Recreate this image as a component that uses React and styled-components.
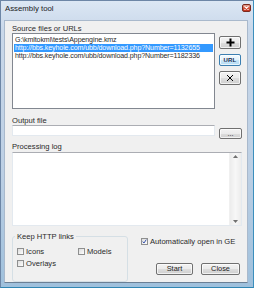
import React from 'react'
import styled, { createGlobalStyle } from 'styled-components'

const Global = createGlobalStyle`
  html, body { margin: 0; padding: 0; background: #ffffff; }
  * { box-sizing: border-box; }
`

const Window = styled.div`
  width: 254px;
  height: 288px;
  display: flex;
  flex-direction: column;
  border: 1px solid #6d86a6;
  border-bottom-color: #2f86b3;
  border-right-color: #3c8fbd;
  background: linear-gradient(to bottom, #dce7f4 0%, #c9d8ea 10%, #bccfe4 60%, #9fc0dc 100%);
  padding: 0 5px 4px 3px;
  font-family: "Liberation Sans", Arial, sans-serif;
  font-size: 7.6px;
  color: #222;
`

const TitleBar = styled.div`
  height: 19px;
  display: flex;
  align-items: flex-start;
  justify-content: space-between;
  padding: 3px 0 0 1px;
`

const Title = styled.span`
  font-size: 7.8px;
  line-height: 9px;
  color: #1b1b1b;
`

const CloseBox = styled.div`
  width: 9px;
  height: 8px;
  margin: 0 -3px 0 0;
  border: 1px solid #7c2a1e;
  border-radius: 2px;
  background: linear-gradient(to bottom, #e8a493 0%, #d4533c 50%, #c2351e 100%);
  display: flex;
  align-items: center;
  justify-content: center;
`

const Client = styled.div`
  flex: 1;
  background: #f0f0f0;
  border: 1px solid #a9b9cc;
  border-bottom-color: #6b7f95;
  padding: 3px 5px 0 7px;
  display: flex;
  flex-direction: column;
`

const Label = styled.div`
  line-height: 9px;
  height: 9px;
  margin-top: ${p => p.$top || 0}px;
  margin-bottom: ${p => p.$bottom || 0}px;
  color: #2a2a2a;
`

const Row = styled.div`
  display: flex;
  align-items: flex-start;
`

const ListBox = styled.div`
  width: 203px;
  height: 76px;
  background: #fff;
  border: 1px solid #828790;
  padding: 2px 1px;
`

const ListItem = styled.div`
  height: 8px;
  line-height: 8px;
  padding-left: 1px;
  font-size: 7.1px;
  letter-spacing: -0.12px;
  white-space: nowrap;
  overflow: hidden;
  background: ${p => (p.$selected ? '#3399ff' : 'transparent')};
  color: ${p => (p.$selected ? '#ffffff' : '#2a2a2a')};
`

const SideButtons = styled.div`
  display: flex;
  flex-direction: column;
  gap: 5px;
  margin: 3px 0 0 4px;
`

const Button = styled.button`
  font-family: inherit;
  font-size: 7.4px;
  color: #222;
  width: ${p => p.$w || 22}px;
  height: ${p => p.$h || 12}px;
  padding: 0;
  margin: 0;
  border: 1px solid ${p => (p.$focus ? '#3c7fb1' : '#707070')};
  border-radius: 2px;
  background: ${p =>
    p.$focus
      ? 'linear-gradient(to bottom, #f4fafe 0%, #e3f2fb 50%, #c9e6f8 51%, #b5dcf4 100%)'
      : 'linear-gradient(to bottom, #f2f2f2 0%, #ebebeb 50%, #dddddd 51%, #cfcfcf 100%)'};
  box-shadow: inset 0 0 0 1px rgba(255, 255, 255, 0.7);
  display: flex;
  align-items: center;
  justify-content: center;
  line-height: 1;
`

const UrlText = styled.span`
  font-weight: bold;
  font-size: 6px;
  letter-spacing: 0.2px;
  color: #17284a;
`

const TextBox = styled.div`
  width: 203px;
  height: 11px;
  background: #fff;
  border: 1px solid #e3e9ef;
  border-top-color: #abadb3;
`

const LogBox = styled.div`
  width: 230px;
  height: 74px;
  background: #fff;
  border: 1px solid #e3e9ef;
  border-top-color: #abadb3;
  display: flex;
  justify-content: flex-end;
`

const ScrollBar = styled.div`
  width: 12px;
  height: 100%;
  background: linear-gradient(to right, #ececec, #f7f7f7 50%, #ececec);
  border-left: 1px solid #f0f0f0;
  display: flex;
  flex-direction: column;
  justify-content: space-between;
  align-items: center;
  padding: 2px 0;
`

const BottomRow = styled.div`
  display: flex;
  margin-top: 6px;
`

const Group = styled.fieldset`
  width: 116px;
  height: 50px;
  margin: 0;
  padding: 0 0 0 2px;
  border: 1px solid #d5dfe5;
  border-radius: 3px;
`

const Legend = styled.legend`
  padding: 0 2px;
  line-height: 9px;
  color: #2a2a2a;
`

const CheckGrid = styled.div`
  display: grid;
  grid-template-columns: 61px auto;
  row-gap: 3px;
  padding: 6px 0 0 2px;
`

const CheckRow = styled.label`
  display: flex;
  align-items: center;
  gap: 2px;
  height: 9px;
  line-height: 9px;
  color: #2a2a2a;
`

const Box = styled.span`
  width: 7px;
  height: 7px;
  border: 1px solid #8e8f8f;
  background: linear-gradient(135deg, #dcdcdc 0%, #f4f4f4 70%, #ffffff 100%);
  display: inline-flex;
  align-items: center;
  justify-content: center;
  flex: none;
`

const RightSide = styled.div`
  flex: 1;
  display: flex;
  flex-direction: column;
  padding: 5px 0 0 13px;
`

const ActionRow = styled.div`
  display: flex;
  gap: 8px;
  margin-top: 17px;
  padding-left: 15px;
`

function Check({ checked, children }) {
  return (
    <CheckRow>
      <Box>
        {checked && (
          <svg width="7" height="7" viewBox="0 0 7 7">
            <path d="M1 3.6 L2.8 5.6 L6 0.8" fill="none" stroke="#2b4aa8" strokeWidth="1.3" />
          </svg>
        )}
      </Box>
      {children}
    </CheckRow>
  )
}

const items = [
  'G:\\kmltokml\\tests\\Appengine.kmz',
  'http://bbs.keyhole.com/ubb/download.php?Number=1132655',
  'http://bbs.keyhole.com/ubb/download.php?Number=1182336',
]

export default function App() {
  return (
    <>
      <Global />
      <Window>
        <TitleBar>
          <Title>Assembly tool</Title>
          <CloseBox>
            <svg width="5" height="4" viewBox="0 0 5 4">
              <path d="M0.5 0.3 L4.5 3.7 M4.5 0.3 L0.5 3.7" stroke="#fff" strokeWidth="1.1" />
            </svg>
          </CloseBox>
        </TitleBar>
        <Client>
          <Label>Source files or URLs</Label>
          <Row>
            <ListBox>
              {items.map((t, i) => (
                <ListItem key={t} $selected={i === 1}>{t}</ListItem>
              ))}
            </ListBox>
            <SideButtons>
              <Button $h={13}>
                <svg width="9" height="9" viewBox="0 0 9 9">
                  <path d="M4.5 0.5 V8.5 M0.5 4.5 H8.5" stroke="#000" strokeWidth="2" />
                </svg>
              </Button>
              <Button $focus>
                <UrlText>URL</UrlText>
              </Button>
              <Button $h={14}>
                <svg width="8" height="8" viewBox="0 0 8 8">
                  <path d="M1 1 L7 7 M7 1 L1 7" stroke="#000" strokeWidth="1" />
                </svg>
              </Button>
            </SideButtons>
          </Row>
          <Label $top={7}>Output file</Label>
          <Row>
            <TextBox />
            <SideButtons>
              <Button $w={23} $h={11}>...</Button>
            </SideButtons>
          </Row>
          <Label $top={3} $bottom={1}>Processing log</Label>
          <LogBox>
            <ScrollBar>
              <svg width="5" height="3" viewBox="0 0 5 3"><path d="M0 3 L2.5 0 L5 3 Z" fill="#707070" /></svg>
              <svg width="5" height="3" viewBox="0 0 5 3"><path d="M0 0 L2.5 3 L5 0 Z" fill="#707070" /></svg>
            </ScrollBar>
          </LogBox>
          <BottomRow>
            <Group>
              <Legend>Keep HTTP links</Legend>
              <CheckGrid>
                <Check>Icons</Check>
                <Check>Models</Check>
                <Check>Overlays</Check>
              </CheckGrid>
            </Group>
            <RightSide>
              <Check checked>Automatically open in GE</Check>
              <ActionRow>
                <Button $w={37}>Start</Button>
                <Button $w={39}>Close</Button>
              </ActionRow>
            </RightSide>
          </BottomRow>
        </Client>
      </Window>
    </>
  )
}
